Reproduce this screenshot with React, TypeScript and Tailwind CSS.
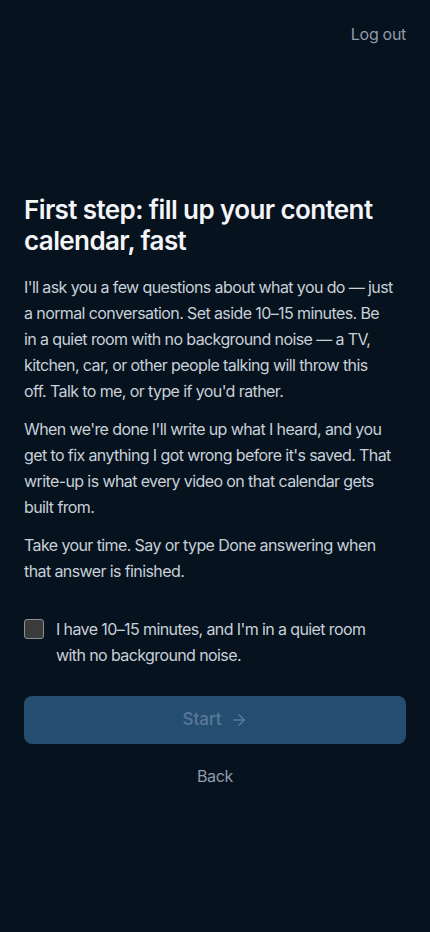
import React, { useState } from 'react';

const App: React.FC = () => {
  const [ready, setReady] = useState(false);

  return (
    <div
      className="min-h-screen w-full bg-[#06121e] text-[#c8d0d9] flex flex-col"
      style={{ fontFamily: 'Inter, "Noto Sans", sans-serif' }}
    >
      <header className="flex justify-end px-6 pt-[23px]">
        <button className="text-[16px] leading-[22px] tracking-[-0.3px] text-[#8f9cab]">Log out</button>
      </header>

      <main className="px-6 pt-[149px] pb-10">
        <h1 className="text-[26px] leading-[31px] font-semibold tracking-[-0.6px] text-[#f3f5f8]">
          First step: fill up your content calendar, fast
        </h1>

        <div className="mt-[18px] space-y-3 text-[16px] leading-[26px] tracking-[-0.6px]">
          <p>
            I'll ask you a few questions about what you do — just
            <br />
            a normal conversation. Set aside 10–15 minutes. Be
            <br />
            in a quiet room with no background noise — a TV,
            <br />
            kitchen, car, or other people talking will throw this
            <br />
            off. Talk to me, or type if you'd rather.
          </p>
          <p>
            When we're done I'll write up what I heard, and you
            <br />
            get to fix anything I got wrong before it's saved. That
            <br />
            write-up is what every video on that calendar gets
            <br />
            built from.
          </p>
          <p>
            Take your time. Say or type Done answering when
            <br />
            that answer is finished.
          </p>
        </div>

        <label className="mt-[32px] flex items-start gap-3 cursor-pointer">
          <input
            type="checkbox"
            checked={ready}
            onChange={(e) => setReady(e.target.checked)}
            className="sr-only"
          />
          <span className="mt-[3px] h-5 w-5 shrink-0 rounded-[3px] border border-[#8a8f96] bg-[#3b3b3c]" />
          <span className="text-[16px] leading-[26px] tracking-[-0.6px] text-[#c8d0d9]">
            I have 10–15 minutes, and I'm in a quiet room
            <br />
            with no background noise.
          </span>
        </label>

        <button
          disabled={!ready}
          className="mt-[28px] flex h-12 w-full items-center justify-center gap-2 rounded-lg bg-[#254d6f] text-[17px] font-medium text-[#59799a]"
        >
          Start
          <svg width="18" height="18" viewBox="0 0 24 24" fill="none" stroke="currentColor" strokeWidth="2" strokeLinecap="round" strokeLinejoin="round">
            <path d="M5 12h14" />
            <path d="m12 5 7 7-7 7" />
          </svg>
        </button>

        <div className="mt-[20px] flex justify-center">
          <button className="text-[16px] leading-[24px] tracking-[-0.3px] text-[#8f9cab]">Back</button>
        </div>
      </main>
    </div>
  );
};

export default App;
